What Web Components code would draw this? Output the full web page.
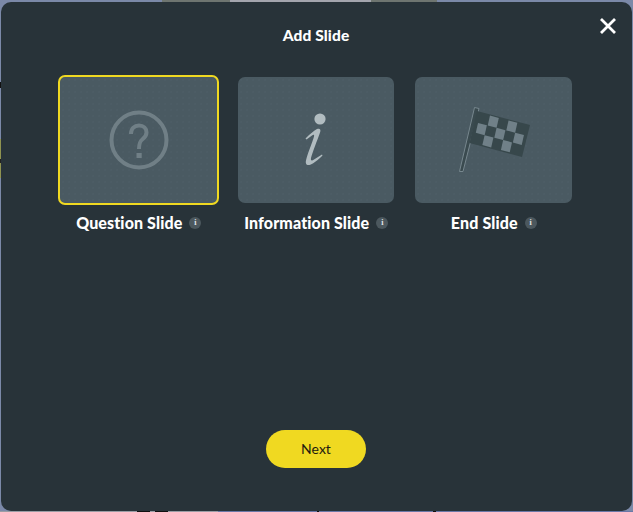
<!DOCTYPE html>
<html lang="en">
<head>
    <meta charset="UTF-8">
    <title>Add Slide</title>
    <style>
        html, body { margin: 0; height: 100%; background: #7b89a8; overflow: hidden; }
        body { font-family: "Lato", "Liberation Sans", sans-serif; }
    </style>
</head>
<body>
    <page-backdrop>
        <add-slide-dialog heading="Add Slide">
            <slide-option label="Question Slide" selected>
                <svg viewBox="0 0 64 64" width="64" height="64" fill="none">
                    <circle cx="32" cy="32" r="27.5" stroke="#707f86" stroke-width="4"/>
                    <path d="M24 26c0-5.500 3.500-8.500 8-8.500 4.500 0 7.500 3 7.500 7 0 3-1.500 4.800-4 6.800-2.500 2-3.500 3.700-3.500 9.700" stroke="#707f86" stroke-width="4"/>
                    <rect x="29.500" y="45" width="5.200" height="5" fill="#707f86"/>
                </svg>
            </slide-option>
            <slide-option label="Information Slide" narrow>
                <svg viewBox="0 0 64 64" width="64" height="64" fill="none">
                    <circle cx="36" cy="11" r="5.600" fill="#b1bcc0"/>
                    <path d="M21.500 30.500C26 26 30 22.500 33 21C36 20 37 21.500 36.200 24C33 33 29 43 27 50C26.500 53 28 53 30 51.500L38 46.500L38.500 47.500C34 52 29 56 25.500 57C22 57.500 21.200 55 22.200 51.500C24.500 43 28.500 34 30 28.500C30.500 26.500 29.500 26.500 28 27.500L22.500 31.500Z" fill="#b1bcc0"/>
                </svg>
            </slide-option>
            <slide-option label="End Slide">
                <svg viewBox="0 0 80 72" width="80" height="72" fill="none" style="transform: translate(3px, 2px)">
                    <path d="M17.500 1.500L22 2.500L6 65.500L2.500 65.500Z" fill="#3a4a4f" stroke="#77878e" stroke-width="1"/>
                    <path d="M20 5L73 19L65 51L12.500 37Z" fill="#37474b"/>
                    <g fill="#708088" transform="matrix(8.83 2.33 -2.5 11 20 5)">
                        <rect x="1.500" y="0.100" width="1" height="0.900"/>
                        <rect x="3.600" y="0.100" width="1" height="0.900"/>
                        <rect x="0.400" y="1" width="1" height="0.900"/>
                        <rect x="2.500" y="1" width="1" height="0.900"/>
                        <rect x="4.600" y="1" width="1" height="0.900"/>
                        <rect x="1.400" y="1.900" width="1" height="0.900"/>
                        <rect x="3.500" y="1.900" width="1" height="0.900"/>
                    </g>
                </svg>
            </slide-option>
        </add-slide-dialog>
    </page-backdrop>

    <script>
        class PageBackdrop extends HTMLElement {
            constructor() {
                super();
                this.attachShadow({ mode: 'open' });
                this.shadowRoot.innerHTML = `
                    <style>
                        :host {
                            display: grid;
                            grid-template: 2px 1fr 1px / 1px 1fr 1px;
                            width: 633px;
                            height: 512px;
                            background: #7b89a8;
                        }
                        .top {
                            grid-column: 1 / 4;
                            background: linear-gradient(90deg,
                                #7b89a8 162px, #6e7570 162px, #6e7570 230px,
                                #a3a5ad 230px, #a3a5ad 371px, #6e7570 371px,
                                #6e7570 437px, #7b89a8 437px);
                        }
                        .left {
                            background: linear-gradient(180deg,
                                #7b89a8 80px, #111 80px, #111 86px,
                                #7b89a8 86px, #7b89a8 137px, #8f9350 137px,
                                #8f9350 157px, #222 157px, #222 161px,
                                #8f9350 161px, #8f9350 176px, #7b89a8 176px);
                        }
                        .bottom {
                            grid-column: 1 / 4;
                            background: linear-gradient(90deg,
                                #9a9da5 137px, #111 137px, #111 150px,
                                #9a9da5 150px, #9a9da5 155px, #111 155px,
                                #111 168px, #9a9da5 168px, #9a9da5 218px,
                                #6a78a8 218px, #6a78a8 317px, #111 317px,
                                #111 319px, #6a78a8 319px, #6a78a8 433px,
                                #111 433px, #111 436px, #6a78a8 436px);
                        }
                    </style>
                    <div class="top"></div>
                    <div class="left"></div>
                    <slot></slot>
                    <div></div>
                    <div class="bottom"></div>
                `;
            }
        }

        class AddSlideDialog extends HTMLElement {
            constructor() {
                super();
                this.attachShadow({ mode: 'open' });
                this.shadowRoot.innerHTML = `
                    <style>
                        :host {
                            display: flex;
                            flex-direction: column;
                            min-height: 0;
                            background: #283339;
                            border-radius: 10px;
                            color: #fff;
                        }
                        header {
                            display: flex;
                            justify-content: center;
                            position: relative;
                            padding: 24px 1px 0 0;
                            height: 49px;
                            box-sizing: border-box;
                        }
                        h1 {
                            margin: 0;
                            font: 900 16px/18px "Lato", "Liberation Sans", sans-serif;
                            font-size: 15.5px;
                            letter-spacing: 0.12px;
                        }
                        .close {
                            position: absolute;
                            top: 15px;
                            right: 15px;
                            width: 18px;
                            height: 18px;
                            display: block;
                        }
                        .options {
                            display: grid;
                            grid-template-columns: repeat(3, 177.5px);
                            padding: 24px 0 0 49px;
                        }
                        footer {
                            margin-top: auto;
                            display: flex;
                            justify-content: center;
                            padding: 0 1px 43px 0;
                        }
                        button {
                            width: 100px;
                            height: 38px;
                            border: 0;
                            border-radius: 19px;
                            background: #f0d921;
                            color: #1f1a10;
                            font: 400 14px "Lato", "Liberation Sans", sans-serif;
                            padding: 0 0 2px;
                        }
                    </style>
                    <header>
                        <h1></h1>
                        <svg class="close" viewBox="0 0 18 18" fill="none">
                            <path d="M2 2L16 16M16 2L2 16" stroke="#fff" stroke-width="2.800"/>
                        </svg>
                    </header>
                    <div class="options"><slot></slot></div>
                    <footer><button>Next</button></footer>
                `;
                this.shadowRoot.querySelector('h1').textContent = this.getAttribute('heading');
            }
        }

        class SlideOption extends HTMLElement {
            constructor() {
                super();
                this.attachShadow({ mode: 'open' });
                this.shadowRoot.innerHTML = `
                    <style>
                        :host {
                            display: flex;
                            flex-direction: column;
                            align-items: center;
                            color: #fff;
                        }
                        .card {
                            box-sizing: border-box;
                            width: 157px;
                            height: 126px;
                            margin: 2px 0;
                            border-radius: 7px;
                            background-color: #4a5a62;
                            background-image: radial-gradient(#52626a 0.5px, transparent 0.8px);
                            background-size: 6px 6px;
                            display: flex;
                            align-items: center;
                            justify-content: center;
                        }
                        :host([narrow]) .card {
                            width: 156px;
                        }
                        :host([selected]) .card {
                            width: 161px;
                            height: 130px;
                            margin: 0;
                            border: 2px solid #f0d921;
                        }
                        .label {
                            display: flex;
                            align-items: center;
                            gap: 7px;
                            margin-top: 9px;
                            font: 900 16px/18px "Lato", "Liberation Sans", sans-serif;
                            letter-spacing: 0.12px;
                        }
                        .info {
                            width: 12px;
                            height: 12px;
                            border-radius: 50%;
                            background: #4c585e;
                            color: #e4e8ea;
                            font: 700 8px/12px "Liberation Serif", serif;
                            text-align: center;
                        }
                    </style>
                    <div class="card"><slot></slot></div>
                    <div class="label"><span class="text"></span><span class="info">i</span></div>
                `;
                this.shadowRoot.querySelector('.text').textContent = this.getAttribute('label');
            }
        }

        customElements.define('page-backdrop', PageBackdrop);
        customElements.define('add-slide-dialog', AddSlideDialog);
        customElements.define('slide-option', SlideOption);
    </script>
</body>
</html>
